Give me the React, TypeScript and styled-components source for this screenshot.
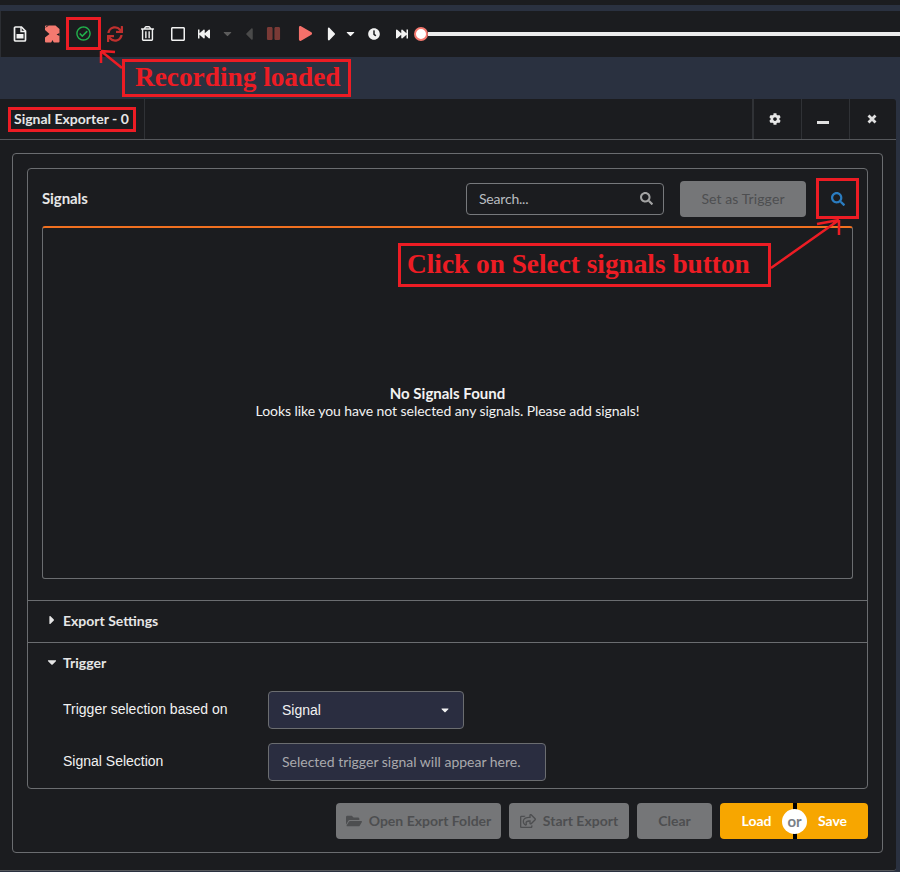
import React from "react";
import styled, { createGlobalStyle } from "styled-components";
import {
  FaCaretDown,
  FaCaretLeft,
  FaCaretRight,
  FaClock,
  FaCog,
  FaFastBackward,
  FaFastForward,
  FaFolderOpen,
  FaPause,
  FaPlay,
  FaRegCheckCircle,
  FaRegShareSquare,
  FaRegSquare,
  FaRegTrashAlt,
  FaSearch,
  FaSync,
} from "react-icons/fa";

const GlobalStyle = createGlobalStyle`
  html, body {
    margin: 0;
    padding: 0;
    background: #2a3140;
  }
  * {
    box-sizing: border-box;
  }
`;

const FileIcon = () => (
  <svg width="14" height="16" viewBox="0 0 14 16">
    <path
      d="M2.5 1h6L12.5 5v9a1 1 0 0 1-1 1h-9a1 1 0 0 1-1-1V2a1 1 0 0 1 1-1z"
      fill="none"
      stroke="#f2f2f2"
      strokeWidth="1.7"
    />
    <path d="M8 1v4.5h4.5" fill="none" stroke="#f2f2f2" strokeWidth="1.4" />
    <rect x="3.5" y="8" width="7" height="4.5" fill="#f2f2f2" />
  </svg>
);

const CloseFileIcon = () => (
  <svg width="16" height="18" viewBox="0 0 16 18">
    <path
      d="M2 0.5h9.5L15.5 4v12.5a1 1 0 0 1-1 1H2a1 1 0 0 1-1-1v-4L5.5 9 1 5V1.5a1 1 0 0 1 1-1z"
      fill="#f4796f"
    />
    <path d="M1 3L5 0.5H3zM7 18l1.5-3L10 18zM15.5 8L12.5 9.5l3 1.5z" fill="#1b1c1f" />
  </svg>
);

const CloseMark = () => (
  <svg width="10" height="10" viewBox="0 0 10 10">
    <path d="M1.5 1.5L8.5 8.5M8.5 1.5L1.5 8.5" stroke="#e0e0e0" strokeWidth="2.8" fill="none" />
  </svg>
);

export default function App() {
  return (
    <Page>
      <GlobalStyle />
      <TopStrip />
      <NavyStrip />
      <Toolbar>
        <Tool $w={32}>
          <FileIcon />
        </Tool>
        <Tool $w={32}>
          <CloseFileIcon />
        </Tool>
        <Tool $w={30} $color="#22b14c">
          <FaRegCheckCircle size={15} />
        </Tool>
        <Tool $w={34} $color="#c0302e">
          <FaSync size={16} />
        </Tool>
        <Tool $w={30}>
          <FaRegTrashAlt size={15} />
        </Tool>
        <Tool $w={32}>
          <FaRegSquare size={16} />
        </Tool>
        <Tool $w={20}>
          <FaFastBackward size={12} />
        </Tool>
        <Tool $w={26} $color="#5c5c5c">
          <FaCaretDown size={13} />
        </Tool>
        <Tool $w={18} $color="#4a4a4a">
          <FaCaretLeft size={20} />
        </Tool>
        <Tool $w={30} $color="#7a3a36">
          <FaPause size={15} />
        </Tool>
        <Tool $w={34} $color="#f4706a">
          <FaPlay size={15} />
        </Tool>
        <Tool $w={20}>
          <FaCaretRight size={22} />
        </Tool>
        <Tool $w={16}>
          <FaCaretDown size={13} />
        </Tool>
        <Tool $w={32}>
          <FaClock size={12} />
        </Tool>
        <Tool $w={24}>
          <FaFastForward size={12} />
        </Tool>
        <Slider>
          <SliderThumb />
          <SliderTrack />
        </Slider>
      </Toolbar>
      <NavyBand />
      <Panel>
        <PanelHeader>
          <PanelTab>Signal Exporter - 0</PanelTab>
          <HeaderSpacer />
          <HeaderButton>
            <FaCog size={12} />
          </HeaderButton>
          <HeaderButton>
            <MinimizeMark />
          </HeaderButton>
          <HeaderButton>
            <CloseMark />
          </HeaderButton>
        </PanelHeader>
        <PanelBody>
          <OuterBox>
            <InnerBox>
              <SignalsHeader>
                <SignalsTitle>Signals</SignalsTitle>
                <SearchBox>
                  <span>Search...</span>
                  <FaSearch size={13} />
                </SearchBox>
                <TriggerButton>Set as Trigger</TriggerButton>
                <SelectSignals>
                  <FaSearch size={14} />
                </SelectSignals>
              </SignalsHeader>
              <SignalsTable>
                <EmptyTitle>No Signals Found</EmptyTitle>
                <EmptyText>Looks like you have not selected any signals. Please add signals!</EmptyText>
              </SignalsTable>
              <AccordionHead $gap={21}>
                <Caret>
                  <FaCaretRight size={14} />
                </Caret>
                Export Settings
              </AccordionHead>
              <AccordionHead>
                <Caret>
                  <FaCaretDown size={14} />
                </Caret>
                Trigger
              </AccordionHead>
              <TriggerBody>
                <FieldRow>
                  <FieldLabel>Trigger selection based on</FieldLabel>
                  <SelectField>
                    <span>Signal</span>
                    <FaCaretDown size={12} />
                  </SelectField>
                </FieldRow>
                <FieldRow>
                  <FieldLabel>Signal Selection</FieldLabel>
                  <ReadonlyField>Selected trigger signal will appear here.</ReadonlyField>
                </FieldRow>
              </TriggerBody>
            </InnerBox>
            <Actions>
              <ActionButton $w={165}>
                <FaFolderOpen size={16} />
                Open Export Folder
              </ActionButton>
              <ActionButton $w={120}>
                <FaRegShareSquare size={16} />
                Start Export
              </ActionButton>
              <ActionButton $w={75}>Clear</ActionButton>
              <LoadSave>
                <LoadPart>Load</LoadPart>
                <SavePart>Save</SavePart>
                <OrBadge>or</OrBadge>
              </LoadSave>
            </Actions>
          </OuterBox>
        </PanelBody>
      </Panel>

      <Marker $x={66} $y={17} $w={35} $h={33} />
      <Marker $x={8} $y={107} $w={128} $h={25} />
      <Marker $x={816} $y={178} $w={43} $h={41} />
      <Callout $x={122} $y={59} $w={229} $h={38} $pad={10}>
        Recording loaded
      </Callout>
      <Callout $x={398} $y={243} $w={373} $h={44} $pad={6}>
        Click on Select signals button
      </Callout>
      <Arrows width="900" height="872" viewBox="0 0 900 872">
        <path d="M122 68L101 51M101 51L115 52M101 51L101 63" />
        <path d="M771 268L839 220M839 220L817 224M839 220L839 235" />
      </Arrows>
    </Page>
  );
}

const Page = styled.div`
  position: relative;
  width: 900px;
  height: 872px;
  overflow: hidden;
  display: flex;
  flex-direction: column;
  background: #2a3140;
  font-family: Lato, "Liberation Sans", sans-serif;
`;

const TopStrip = styled.div`
  height: 5px;
  background: #1b1c1f;
`;

const NavyStrip = styled.div`
  height: 6px;
  background: #2a3140;
`;

const Toolbar = styled.div`
  height: 46px;
  padding: 0 0 1px 3px;
  display: flex;
  align-items: center;
  background: #1b1c1f;
  border-left: 1px solid #2c2e33;
`;

const Tool = styled.div<{ $w: number; $color?: string }>`
  width: ${(p) => p.$w}px;
  flex: none;
  display: flex;
  align-items: center;
  justify-content: center;
  color: ${(p) => p.$color || "#f2f2f2"};
`;

const Slider = styled.div`
  flex: 1;
  display: flex;
  align-items: center;
`;

const SliderThumb = styled.div`
  width: 14px;
  height: 14px;
  flex: none;
  border-radius: 50%;
  background: #fff;
  border: 2px solid #f4796f;
`;

const SliderTrack = styled.div`
  flex: 1;
  height: 4px;
  background: #ececec;
`;

const NavyBand = styled.div`
  height: 42px;
  background: #2a3140;
`;

const Panel = styled.div`
  width: 896px;
  height: 772px;
  background: #1b1c1f;
  border-bottom: 1px solid #55575b;
  border-top-right-radius: 3px;
  border-bottom-right-radius: 3px;
  display: flex;
  flex-direction: column;
`;

const PanelHeader = styled.div`
  height: 41px;
  flex: none;
  display: flex;
  border-bottom: 1px solid #55575b;
`;

const PanelTab = styled.div`
  width: 145px;
  padding: 0 0 1px 14px;
  display: flex;
  align-items: center;
  border-right: 1px solid #303236;
  color: #e6e6e6;
  font-size: 14px;
  font-weight: 700;
  white-space: nowrap;
`;

const HeaderSpacer = styled.div`
  flex: 1;
  border-right: 2px solid #303236;
`;

const HeaderButton = styled.div`
  width: 48px;
  padding-right: 6px;
  display: flex;
  align-items: center;
  justify-content: center;
  color: #e6e6e6;
  border-right: 1px solid #303236;
  &:last-child {
    width: 46px;
    padding-right: 2px;
    border-right: none;
  }
`;

const MinimizeMark = styled.div`
  width: 12px;
  height: 3px;
  margin-top: 7px;
  background: #e0e0e0;
`;

const PanelBody = styled.div`
  flex: 1;
  padding: 13px 13px 17px 12px;
  display: flex;
`;

const OuterBox = styled.div`
  flex: 1;
  padding: 14px 14px 13px 14px;
  display: flex;
  flex-direction: column;
  border: 1px solid #6b6d70;
  border-radius: 4px;
`;

const InnerBox = styled.div`
  height: 621px;
  flex: none;
  display: flex;
  flex-direction: column;
  border: 1px solid #6b6d70;
  border-radius: 4px;
`;

const SignalsHeader = styled.div`
  height: 57px;
  flex: none;
  padding: 0 7px 0 14px;
  display: flex;
  align-items: center;
`;

const SignalsTitle = styled.div`
  flex: 1;
  color: #e6e6e6;
  font-size: 15px;
  font-weight: 700;
  letter-spacing: -0.1px;
`;

const SearchBox = styled.div`
  width: 198px;
  height: 32px;
  margin-top: 2px;
  padding: 0 10px 1px 12px;
  display: flex;
  align-items: center;
  justify-content: space-between;
  border: 1px solid #77797c;
  border-radius: 4px;
  color: #b9bcc0;
  font-size: 14px;
  letter-spacing: -0.2px;
  svg {
    color: #a3a3a3;
  }
`;

const TriggerButton = styled.div`
  width: 126px;
  height: 36px;
  margin: 3px 0 0 16px;
  padding-bottom: 1px;
  display: flex;
  align-items: center;
  justify-content: center;
  border-radius: 4px;
  background: #757678;
  color: #4d4e50;
  font-size: 14px;
  letter-spacing: 0.1px;
`;

const SelectSignals = styled.div`
  width: 44px;
  height: 36px;
  margin: 3px 0 0 10px;
  display: flex;
  align-items: center;
  justify-content: center;
  color: #2a7cc0;
`;

const SignalsTable = styled.div`
  height: 353px;
  flex: none;
  margin: 0 14px;
  padding-bottom: 2px;
  display: flex;
  flex-direction: column;
  align-items: center;
  justify-content: center;
  border: 1px solid #6b6d70;
  border-top: 2px solid #f07020;
  border-radius: 3px;
  color: #f2f2f2;
  font-size: 14px;
  line-height: 17px;
`;

const EmptyTitle = styled.div`
  font-size: 15px;
  font-weight: 700;
`;

const EmptyText = styled.div`
  letter-spacing: -0.06px;
`;

const AccordionHead = styled.div<{ $gap?: number }>`
  height: 42px;
  flex: none;
  margin-top: ${(p) => p.$gap || 0}px;
  padding: 0 0 2px 17px;
  display: flex;
  align-items: center;
  border-top: 1px solid #6b6d70;
  color: #e6e6e6;
  font-size: 14px;
  font-weight: 700;
`;

const Caret = styled.span`
  width: 18px;
  margin-top: -1px;
  display: flex;
  color: #e6e6e6;
`;

const TriggerBody = styled.div`
  flex: 1;
  padding: 7px 0 0 35px;
  display: flex;
  flex-direction: column;
  gap: 14px;
`;

const FieldRow = styled.div`
  height: 38px;
  display: flex;
  align-items: center;
`;

const FieldLabel = styled.div`
  width: 205px;
  margin-top: -2px;
  color: #f2f2f2;
  font-family: "Liberation Sans", sans-serif;
  font-size: 14px;
`;

const SelectField = styled.div`
  width: 196px;
  height: 38px;
  padding: 0 12px 0 13px;
  display: flex;
  align-items: center;
  justify-content: space-between;
  border: 1px solid #6b6d70;
  border-radius: 4px;
  background: #2a2d40;
  color: #f2f2f2;
  font-family: "Liberation Sans", sans-serif;
  font-size: 14px;
`;

const ReadonlyField = styled.div`
  width: 278px;
  height: 38px;
  padding: 0 13px 1px;
  display: flex;
  align-items: center;
  border: 1px solid #6b6d70;
  border-radius: 4px;
  background: #2a2d40;
  color: #a9a9ad;
  font-size: 14px;
  white-space: nowrap;
`;

const Actions = styled.div`
  height: 36px;
  margin-top: 14px;
  display: flex;
  justify-content: flex-end;
  gap: 8px;
`;

const ActionButton = styled.div<{ $w: number }>`
  width: ${(p) => p.$w}px;
  padding-bottom: 1px;
  display: flex;
  align-items: center;
  justify-content: center;
  gap: 7px;
  border-radius: 4px;
  background: #757678;
  color: #4d4e50;
  font-size: 14px;
  font-weight: 700;
  white-space: nowrap;
`;

const LoadSave = styled.div`
  position: relative;
  width: 148px;
  display: flex;
  gap: 4px;
  background: #000;
  border-radius: 4px;
`;

const LoadPart = styled.div`
  flex: 1;
  padding-bottom: 1px;
  display: flex;
  align-items: center;
  justify-content: center;
  background: #f7a600;
  border-radius: 4px 0 0 4px;
  color: #fff;
  font-size: 14px;
  font-weight: 700;
`;

const SavePart = styled(LoadPart)`
  flex: 0 0 71px;
  border-radius: 0 4px 4px 0;
`;

const OrBadge = styled.div`
  position: absolute;
  left: 62px;
  top: 6px;
  width: 25px;
  height: 25px;
  padding-bottom: 2px;
  display: flex;
  align-items: center;
  justify-content: center;
  border-radius: 50%;
  background: #fff;
  color: #7b7f86;
  font-size: 15px;
  font-weight: 700;
`;

const Marker = styled.div<{ $x: number; $y: number; $w: number; $h: number }>`
  position: absolute;
  left: ${(p) => p.$x}px;
  top: ${(p) => p.$y}px;
  width: ${(p) => p.$w}px;
  height: ${(p) => p.$h}px;
  border: 3px solid #ed1c24;
`;

const Callout = styled(Marker)<{ $pad: number }>`
  padding: 0 0 2px ${(p) => p.$pad}px;
  display: flex;
  align-items: center;
  color: #ed1c24;
  font-family: "Liberation Serif", serif;
  font-size: 27.3px;
  font-weight: 700;
  white-space: nowrap;
`;

const Arrows = styled.svg`
  position: absolute;
  left: 0;
  top: 0;
  pointer-events: none;
  path {
    fill: none;
    stroke: #ed1c24;
    stroke-width: 2.5;
  }
`;
